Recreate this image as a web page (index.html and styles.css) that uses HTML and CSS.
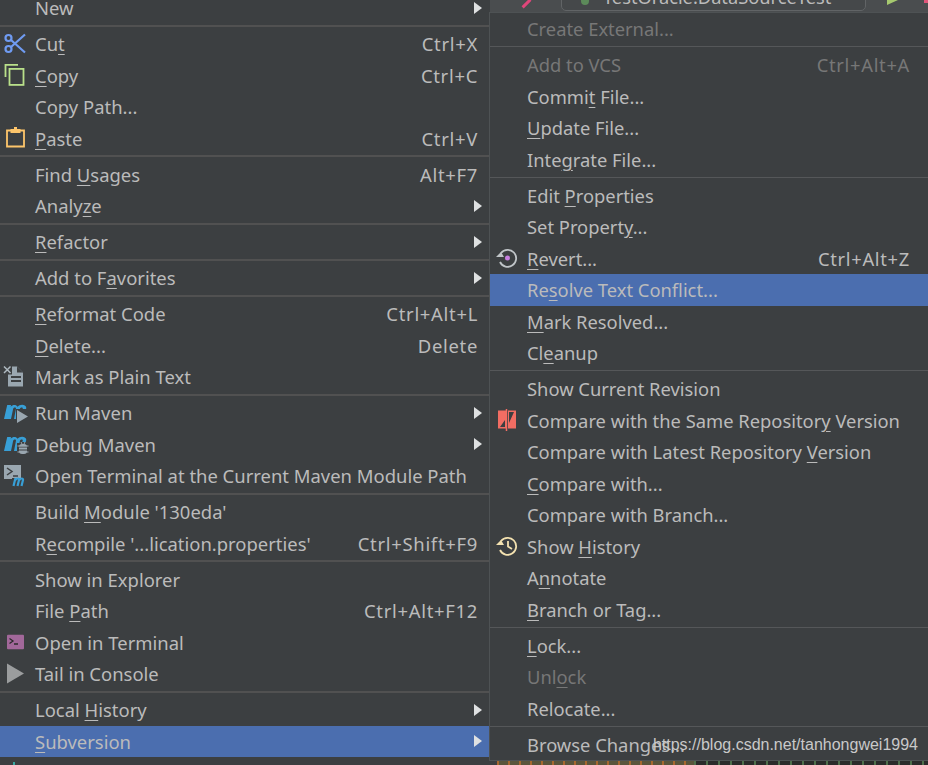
FILE: index.html
```html
<!DOCTYPE html>
<html lang="en">
<head>
<meta charset="utf-8">
<title>Context menu</title>
<link rel="stylesheet" href="styles.css">
</head>
<body>
<div class="screen">
  <ul class="menu main">
    <li class="row"><span class="label">New</span><i class="arrow"></i></li>
    <li class="sep"></li>
    <li class="row"><svg class="ic" viewBox="0 0 22 22"><g fill="none" stroke="#6f9bf2" stroke-width="2.200"><circle cx="4.500" cy="6" r="3"/><circle cx="4.500" cy="17" r="3"/><path d="M7 8 21 20.500M7 15 21 2.500"/></g></svg><span class="label">Cu<u>t</u></span><span class="key">Ctrl+X</span></li>
    <li class="row"><svg class="ic" viewBox="0 0 22 22"><g fill="none" stroke="#b9e08a" stroke-width="1.800"><path d="M1.500 13V.9H14"/><rect x="5.500" y="4.900" width="14" height="16"/></g></svg><span class="label"><u>C</u>opy</span><span class="key">Ctrl+C</span></li>
    <li class="row"><span class="label">Copy Path...</span></li>
    <li class="row"><svg class="ic" viewBox="0 0 22 22"><path fill="none" stroke="#fdc56b" stroke-width="1.800" d="M7 3.500H3V19.500H20V3.500H16"/><path fill="#fdc56b" d="M6.500 2H10V0H13V2H16.500V6H6.500Z"/></svg><span class="label"><u>P</u>aste</span><span class="key">Ctrl+V</span></li>
    <li class="sep"></li>
    <li class="row"><span class="label">Find <u>U</u>sages</span><span class="key">Alt+F7</span></li>
    <li class="row"><span class="label">Analy<u>z</u>e</span><i class="arrow"></i></li>
    <li class="sep"></li>
    <li class="row"><span class="label"><u>R</u>efactor</span><i class="arrow"></i></li>
    <li class="sep"></li>
    <li class="row"><span class="label">Add to F<u>a</u>vorites</span><i class="arrow"></i></li>
    <li class="sep"></li>
    <li class="row"><span class="label"><u>R</u>eformat Code</span><span class="key">Ctrl+Alt+L</span></li>
    <li class="row"><span class="label"><u>D</u>elete...</span><span class="key">Delete</span></li>
    <li class="row"><svg class="ic" viewBox="0 0 22 22"><path fill="#9aa7b0" d="M4 1.500H13L19 7.500V21.500H4Z"/><path fill="#3c3f41" d="M13 1.500V7.500H19Z"/><path fill="#3c3f41" d="M-1 0H8V9.500H-1Z"/><path fill="none" stroke="#aeb9c0" stroke-width="1.500" d="M0 1.500 6.500 8M6.500 1.500 0 8"/><path stroke="#3c3f41" stroke-width="1.800" d="M7 12H17M7 16H17"/></svg><span class="label">Mark as Plain Text</span></li>
    <li class="sep"></li>
    <li class="row"><svg class="ic wide" viewBox="0 0 24 22"><path fill="#389fd6" d="M0 18 3.200 4H7L6.700 5.800C8.500 3.300 12.500 3.300 13.500 5.800 15.500 3.300 21.500 2.800 22.300 6.800L21.500 11H18L18.800 7.500C19 6 16.500 6 16 7.500L13.500 18H10L12 7.500C12.200 6 9.800 6 9.200 7.500L7 18Z"/><path fill="#3c3f41" d="M12 8H24V22H12Z"/><path fill="#9aa7b0" d="M13 9 24 15.500 13 22Z"/></svg><span class="label">Run Maven</span><i class="arrow"></i></li>
    <li class="row"><svg class="ic wide" viewBox="0 0 24 22"><path fill="#389fd6" d="M0 18 3.200 4H7L6.700 5.800C8.500 3.300 12.500 3.300 13.500 5.800 15.500 3.300 21.500 2.800 22.300 6.800L21.800 9H18.300L18.800 7.500C19 6 16.500 6 16 7.500L13.500 18H10L12 7.500C12.200 6 9.800 6 9.200 7.500L7 18Z"/><path fill="#3c3f41" d="M13 10H24V22H13Z"/><rect x="15" y="11" width="8" height="10" rx="3" fill="#9aa7b0"/><path stroke="#3c3f41" d="M15 14H23M15 17H23"/><path stroke="#9aa7b0" d="M17 9 18 11M21 9 20 11M13.500 13H24.500M13.500 19H24.500"/></svg><span class="label">Debug Maven</span><i class="arrow"></i></li>
    <li class="row"><svg class="ic wide" viewBox="0 0 24 22"><path fill="#9aa7b0" d="M0 1H17V15H0Z"/><path fill="none" stroke="#3c3f41" stroke-width="1.500" d="M3 4 8 7.500 3 11M9 12H14"/><path fill="#3c3f41" d="M8 14H24V23H8Z"/><path fill="none" stroke="#389fd6" stroke-width="2.200" d="M9.500 22 11.500 14M11.500 16C12.500 14 15.500 14 15 16L13.500 22M15.500 16C16.500 14 19.500 14 19 16L17.500 22"/></svg><span class="label">Open Terminal at the Current Maven Module Path</span></li>
    <li class="sep"></li>
    <li class="row"><span class="label">Build <u>M</u>odule '130eda'</span></li>
    <li class="row"><span class="label">R<u>e</u>compile '...lication.properties'</span><span class="key">Ctrl+Shift+F9</span></li>
    <li class="sep"></li>
    <li class="row"><span class="label">Show in Explorer</span></li>
    <li class="row"><span class="label">File <u>P</u>ath</span><span class="key">Ctrl+Alt+F12</span></li>
    <li class="row"><svg class="ic" viewBox="0 0 22 22"><rect x="3" y="3.700" width="17" height="14.500" rx="1" fill="#a2689a"/><path fill="none" stroke="#2b2b2b" stroke-width="1.300" d="M5.500 7.500 9 10 5.500 12.500M10 13H14"/></svg><span class="label">Open in Terminal</span></li>
    <li class="row"><svg class="ic" viewBox="0 0 22 22"><path fill="#9b9d9e" d="M3 1.500 20 11.500 3 21.500Z"/></svg><span class="label">Tail in Console</span></li>
    <li class="sep"></li>
    <li class="row"><span class="label">Local <u>H</u>istory</span><i class="arrow"></i></li>
    <li class="row active"><span class="label"><u>S</u>ubversion</span><i class="arrow"></i></li>
  </ul>
  <div class="backdrop">
    <div class="toolbar"><i class="mark"></i><span class="pill"><i class="dot"></i>TestOracle.DataSourceTest</span><i class="play"></i><i class="flag"></i></div>
    <div class="code"><i class="code-warm"></i><i class="code-dark"></i></div>
  </div>
  <ul class="menu sub">
    <li class="row off"><span class="label">Create External...</span></li>
    <li class="sep"></li>
    <li class="row off"><span class="label">Add to VCS</span><span class="key">Ctrl+Alt+A</span></li>
    <li class="row"><span class="label">Commi<u>t</u> File...</span></li>
    <li class="row"><span class="label"><u>U</u>pdate File...</span></li>
    <li class="row"><span class="label">Inte<u>g</u>rate File...</span></li>
    <li class="sep"></li>
    <li class="row"><span class="label">Edit <u>P</u>roperties</span></li>
    <li class="row"><span class="label">Set Propert<u>y</u>...</span></li>
    <li class="row"><svg class="ic" viewBox="0 0 22 22"><path fill="none" stroke="#c0c5c8" stroke-width="1.800" d="M5 6A8.500 8.500 0 1 1 4 15"/><path fill="#c0c5c8" d="M0 10H8L5 5Z"/><circle cx="11.500" cy="11" r="2.500" fill="#c77fe0"/></svg><span class="label"><u>R</u>evert...</span><span class="key">Ctrl+Alt+Z</span></li>
    <li class="row active"><span class="label">Re<u>s</u>olve Text Conflict...</span></li>
    <li class="row"><span class="label"><u>M</u>ark Resolved...</span></li>
    <li class="row"><span class="label">Cl<u>e</u>anup</span></li>
    <li class="sep"></li>
    <li class="row"><span class="label">Show Current Revision</span></li>
    <li class="row"><svg class="ic" viewBox="0 0 22 22"><path fill="#f26d63" d="M2 1.500H10V19.500H2ZM12 1.500H20V19.500H12Z"/><path fill="#3c3f41" d="M4 18 9 11V18ZM13 3H18L13 14Z"/><path stroke="#f26d63" stroke-width="1.500" d="M10.500 0V22"/></svg><span class="label">Compare with the Same Repositor<u>y</u> Version</span></li>
    <li class="row"><span class="label">Compare with Latest Repository <u>V</u>ersion</span></li>
    <li class="row"><span class="label"><u>C</u>ompare with...</span></li>
    <li class="row"><span class="label">Compare with Branch...</span></li>
    <li class="row"><svg class="ic" viewBox="0 0 22 22"><path fill="none" stroke="#f4e2b0" stroke-width="1.800" d="M5 6A8.500 8.500 0 1 1 4 15M12 6V11.500L16 14"/><path fill="#f4e2b0" d="M0 10H8L5 5Z"/></svg><span class="label">Show <u>H</u>istory</span></li>
    <li class="row"><span class="label">A<u>n</u>notate</span></li>
    <li class="row"><span class="label"><u>B</u>ranch or Tag...</span></li>
    <li class="sep"></li>
    <li class="row"><span class="label"><u>L</u>ock...</span></li>
    <li class="row off"><span class="label">Unl<u>o</u>ck</span></li>
    <li class="row"><span class="label">Relocate...</span></li>
    <li class="sep"></li>
    <li class="row"><span class="label">Browse Changes...</span></li>
  </ul>
  <div class="watermark">https://blog.csdn.net/tanhongwei1994</div>
  <i class="tick"></i>
</div>
</body>
</html>
```
FILE: styles.css
```css
* { box-sizing: border-box; }
html, body { margin: 0; padding: 0; }
body { background: #3c3f41; overflow: hidden; }
.screen {
  position: relative;
  width: 928px;
  height: 765px;
  overflow: hidden;
  display: flex;
  font-family: "Noto Sans", sans-serif;
  font-size: 18.350px;
  color: #bbbbbb;
}
.menu { list-style: none; margin: 0; padding: 0; background: #3c3f41; }
.main { width: 490px; flex: none; margin-top: -8px; font-size: 18.450px; }
.sub {
  position: absolute;
  left: 489px;
  top: 12px;
  width: 439px;
  height: 749px;
  border: 1px solid #4e5254;
  border-right: 0;
}
.row {
  height: 31.500px;
  display: flex;
  align-items: center;
  position: relative;
  padding-left: 35px;
  padding-right: 12px;
  white-space: nowrap;
}
.sub .row { padding-left: 37px; padding-right: 18px; }
.sep { height: 4.500px; padding-top: 1.250px; }
.sub .sep { padding-top: 1.750px; }
.sep::before { content: ""; display: block; height: 2px; background: #515151; }
.sub .sep::before { height: 1px; background: #555759; }
.label { flex: 1; }
.key { flex: none; letter-spacing: 0.700px; }
u { text-underline-offset: 3px; text-decoration-thickness: 1px; }
.active { background: #4b6eaf; }
.off { color: #777777; }
.arrow {
  position: absolute;
  right: 8px;
  top: 50%;
  margin-top: -6px;
  border-left: 8px solid #dfe1e2;
  border-top: 6px solid transparent;
  border-bottom: 6px solid transparent;
}
.ic { position: absolute; left: 4px; top: 4px; width: 22px; height: 22px; overflow: visible; }
.ic.wide { width: 24px; }
.sub .ic { left: 6px; }
.backdrop {
  flex: 1;
  position: relative;
  display: flex;
  flex-direction: column;
  justify-content: space-between;
  background: #3c3f41;
}
.toolbar {
  height: 12px;
  display: flex;
  align-items: flex-end;
  overflow: hidden;
  background: #4a4d4f;
}
.mark { flex: none; width: 11px; height: 3px; margin: 0 0 7px 31px; background: #e0467a; transform: rotate(-45deg); }
.pill {
  flex: none;
  margin-left: 29px;
  width: 305px;
  height: 30px;
  display: flex;
  align-items: flex-end;
  gap: 14px;
  padding: 0 0 4px 19px;
  border: 1px solid #616466;
  border-radius: 5px;
  font-size: 18.250px;
  line-height: 18px;
  color: #bbbbbb;
  background: #45484a;
  margin-bottom: 1px;
}
.dot { width: 8px; height: 16px; border-radius: 4px; background: #5c8a5a; margin-bottom: 1px; }
.play { flex: none; margin: 0 0 7px 21px; border-left: 11px solid #a6c96f; border-top: 5px solid transparent; transform: scaleY(-1); }
.flag { flex: none; width: 8px; height: 3px; margin: 0 0 9px 26px; background: #e0567a; }
.code { height: 4px; display: flex; padding-left: 7px; }
.code-warm {
  width: 197px;
  background: repeating-linear-gradient(90deg, #a8682f 0 2px, #5a553c 2px 11px);
}
.code-dark {
  flex: 1;
  background: repeating-linear-gradient(90deg, #4f6f4c 0 2px, #2b2b2b 2px 12px);
}
.watermark {
  position: absolute;
  right: 10px;
  top: 736px;
  font-family: "Liberation Sans", sans-serif;
  font-size: 16px;
  line-height: 18px;
  color: #c9c9c9;
}
.tick {
  position: absolute;
  left: 13px;
  top: 762px;
  width: 2px;
  height: 3px;
  background: #3aa6a0;
}
```
